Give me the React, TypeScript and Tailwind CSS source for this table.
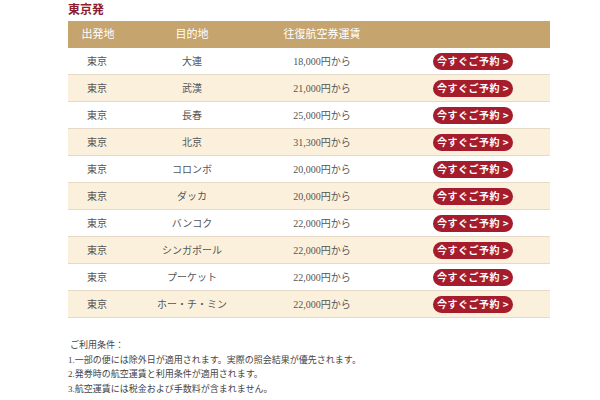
import React from "react"

const rows = [
  { from: "東京", to: "大連", price: "18,000円から" },
  { from: "東京", to: "武漢", price: "21,000円から" },
  { from: "東京", to: "長春", price: "25,000円から" },
  { from: "東京", to: "北京", price: "31,300円から" },
  { from: "東京", to: "コロンボ", price: "20,000円から" },
  { from: "東京", to: "ダッカ", price: "20,000円から" },
  { from: "東京", to: "バンコク", price: "22,000円から" },
  { from: "東京", to: "シンガポール", price: "22,000円から" },
  { from: "東京", to: "プーケット", price: "22,000円から" },
  { from: "東京", to: "ホー・チ・ミン", price: "22,000円から" },
]

const serif = "font-['Liberation_Serif','Noto_Sans_CJK_JP',serif]"

function BookButton() {
  return (
    <button className="flex items-center justify-center w-[80px] h-[17px] rounded-full bg-[#a51c2c] text-white text-[10px] font-semibold tracking-[0.5px] font-['Noto_Sans_CJK_JP',sans-serif] leading-none">
      今すぐご予約 &gt;
    </button>
  )
}

export default function App() {
  return (
    <div className={`w-[600px] h-[400px] bg-white pl-[68px] ${serif}`}>
      <div className="h-[21px] leading-[20px] text-[12px] font-bold text-[#8c1d2c]">東京発</div>

      <div className="w-[482px]">
        <div className="grid grid-cols-[58px_132px_128px_164px] h-[27px] items-center bg-[#c5a46d] text-white text-[11px]">
          <div className="text-center pl-[2px]">出発地</div>
          <div className="text-center">目的地</div>
          <div className="text-center">往復航空券運賃</div>
          <div />
        </div>

        {rows.map((r, i) => (
          <div
            key={i}
            className={`grid grid-cols-[58px_132px_128px_164px] h-[27px] items-center border-b border-[#e6dac6] text-[10px] text-[#555] ${
              i % 2 === 1 ? "bg-[#fbf0dc]" : "bg-white"
            }`}
          >
            <div className="text-center">{r.from}</div>
            <div className="text-center">{r.to}</div>
            <div className="text-center">{r.price}</div>
            <div className="flex justify-center pl-[10px]">
              <BookButton />
            </div>
          </div>
        ))}
      </div>

      <div className="mt-[20px] text-[9px] leading-[14.5px] text-[#444]">
        <div className="pl-[2px]">ご利用条件：</div>
        <div>1.一部の便には除外日が適用されます。実際の照会結果が優先されます。</div>
        <div>2.発券時の航空運賃と利用条件が適用されます。</div>
        <div>3.航空運賃には税金および手数料が含まれません。</div>
      </div>
    </div>
  )
}
